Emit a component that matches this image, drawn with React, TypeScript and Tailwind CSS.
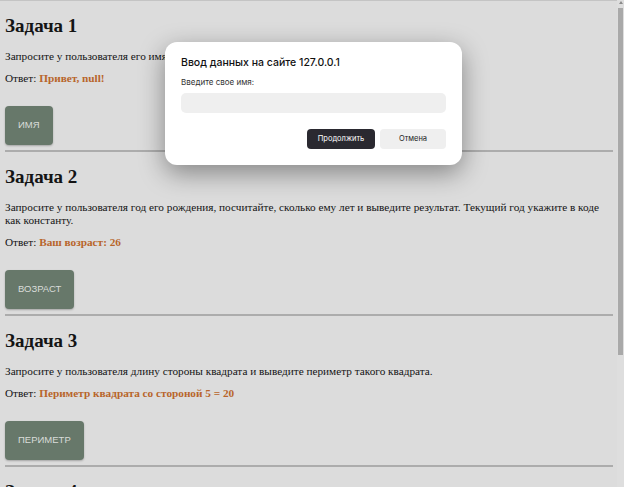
const tasks = [
  {
    title: 'Задача 1',
    text: 'Запросите у пользователя его имя и выведите в ответ: «Привет, его имя!».',
    answer: 'Привет, null!',
    button: 'Имя',
  },
  {
    title: 'Задача 2',
    text: 'Запросите у пользователя год его рождения, посчитайте, сколько ему лет и выведите результат. Текущий год укажите в коде как константу.',
    answer: 'Ваш возраст: 26',
    button: 'Возраст',
  },
  {
    title: 'Задача 3',
    text: 'Запросите у пользователя длину стороны квадрата и выведите периметр такого квадрата.',
    answer: 'Периметр квадрата со стороной 5 = 20',
    button: 'Периметр',
  },
  {
    title: 'Задача 4',
    text: 'Запросите у пользователя радиус окружности и выведите площадь такой окружности.',
    answer: '',
    button: 'Площадь',
  },
]

function Task({ title, text, answer, button }: (typeof tasks)[number]) {
  return (
    <section className="border-b-2 border-[#acacac] pb-[5px]">
      <h2 className="mt-[14px] text-[19px] leading-[22px] font-bold">{title}</h2>
      <p className="mt-[13px] text-[11.25px] leading-[13px]">{text}</p>
      <p className="mt-[9px] text-[11.25px] leading-[13px]">
        Ответ: <span className="font-bold text-[#b8652b]">{answer}</span>
      </p>
      <button className="mt-[21px] h-[39px] px-[13px] rounded-[4px] bg-[#67786a] shadow-[0_1px_2px_rgba(0,0,0,0.25)] text-[9.5px] uppercase text-[#d9dcd9] font-['Liberation_Sans',Arial,sans-serif]">
        {button}
      </button>
    </section>
  )
}

function PromptDialog() {
  return (
    <div className="absolute left-[165px] top-[42px] w-[297px] rounded-[12px] bg-white px-[16px] pt-[14px] pb-[16px] shadow-[0_8px_26px_rgba(0,0,0,0.4)] font-['Inter','Noto_Sans',sans-serif]">
      <div className="text-[10.5px] leading-[14px] font-medium text-[#111]">Ввод данных на сайте 127.0.0.1</div>
      <div className="mt-[7px] text-[8px] leading-[10px] text-[#333]">Введите свое имя:</div>
      <div className="mt-[6px] h-[20px] rounded-[5px] bg-[#efefef]" />
      <div className="mt-[16px] flex justify-end gap-[5px]">
        <button className="h-[20px] w-[68px] rounded-[4px] bg-[#2a2930] text-[7.5px] text-white">Продолжить</button>
        <button className="h-[20px] w-[66px] rounded-[4px] bg-[#efefef] text-[7.5px] text-[#222]">Отмена</button>
      </div>
    </div>
  )
}

export default function App() {
  return (
    <div className="relative flex h-[487px] w-[624px] overflow-hidden bg-[#dcdcdc] text-[#141414] font-['Liberation_Serif','Times_New_Roman',serif]">
      <main className="flex-1 border-t border-[#c4c4c4] pl-[5px] pr-[4px]">
        {tasks.map((t) => (
          <Task key={t.title} {...t} />
        ))}
      </main>
      <div className="flex w-[7px] flex-col items-center bg-[#dedede] pt-[1px]">
        <div className="h-0 w-0 border-x-[2px] border-b-[3px] border-x-transparent border-b-[#8a8a8a]" />
        <div className="mt-[4px] h-[347px] w-[5px] bg-[#a9a9a9]" />
      </div>
      <PromptDialog />
    </div>
  )
}
